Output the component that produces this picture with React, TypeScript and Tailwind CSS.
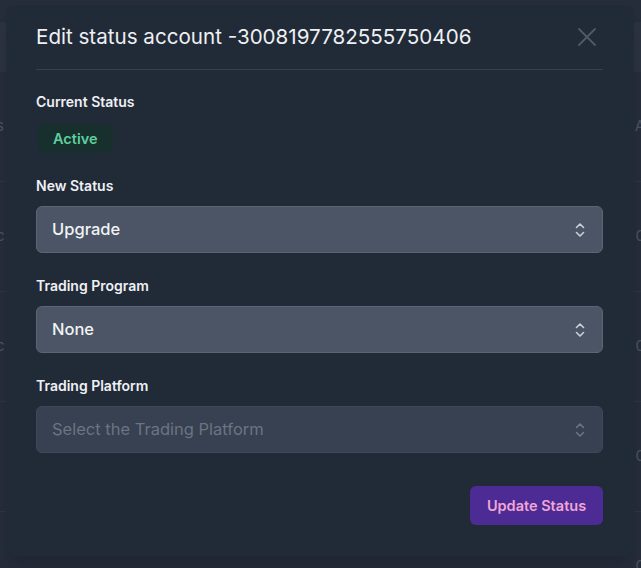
const rows = [
  { left: "s", right: "A" },
  { left: "c", right: "0" },
  { left: "c", right: "0" },
  { left: "l", right: "0" },
  { left: "l", right: "0" },
];

export default function App() {
  return (
    <div
      className="relative h-[568px] w-full overflow-hidden bg-[#262d3a]"
      style={{ fontFamily: "Inter, 'Noto Sans', sans-serif" }}
    >
      {/* page behind the modal (dimmed table) */}
      <div className="flex flex-col text-[15px] text-[#4a5261]">
        <div className="h-[22px]" />
        <div className="h-[50px] bg-[#2b3240]" />
        {rows.map((r, i) => (
          <div
            key={i}
            className="flex h-[110px] items-center justify-between border-b border-[#2e3543]"
          >
            <span className="-ml-[4px]">{r.left}</span>
            <span className="-mr-[4px]">{r.right}</span>
          </div>
        ))}
      </div>

      {/* modal */}
      <div className="absolute left-[6px] top-[5px] flex h-[551px] w-[628px] flex-col rounded-lg bg-[#212a37] pl-[30px] pr-[31px] shadow-xl">
        <div className="flex items-center justify-between border-b border-[#364050] pb-[18px] pt-[18px]">
          <h2 className="text-[20.6px] leading-[28px] text-[#eef0f3]">
            Edit status account -3008197782555750406
          </h2>
          <svg
            width="20"
            height="20"
            viewBox="0 0 20 20"
            className="mr-[6px] text-[#4f5968]"
            fill="none"
            stroke="currentColor"
            strokeWidth="1.8"
            strokeLinecap="round"
          >
            <path d="M2 2 L18 18 M18 2 L2 18" />
          </svg>
        </div>

        <p className="mt-[22px] text-sm font-semibold leading-5 text-[#eef0f3]">
          Current Status
        </p>
        <div className="mt-[13px] flex">
          <span className="ml-[2px] flex h-[28px] items-center rounded-md bg-[#17302e] px-[15px] text-[14.5px] font-semibold text-[#5fcf9e]">
            Active
          </span>
        </div>

        <Field label="New Status" value="Upgrade" />
        <Field label="Trading Program" value="None" />
        <Field label="Trading Platform" value="Select the Trading Platform" placeholder />

        <div className="mt-[33px] flex justify-end">
          <button className="h-[39px] w-[133px] rounded-md bg-[#4c2c94] text-[14.5px] font-semibold text-[#f1a6d6]">
            Update Status
          </button>
        </div>
      </div>
    </div>
  );
}

function Field({
  label,
  value,
  placeholder,
}: {
  label: string;
  value: string;
  placeholder?: boolean;
}) {
  return (
    <div className="mt-[23px]">
      <p className="text-sm font-semibold leading-5 text-[#eef0f3]">{label}</p>
      <div
        className={
          "mt-[10px] flex h-[47px] items-center justify-between rounded-md border pl-[15px] pr-[17px] " +
          (placeholder
            ? "border-[#3f4858] bg-[#374151] text-[#6b7482]"
            : "border-[#5b6576] bg-[#4b5565] text-[#f1f3f5]")
        }
      >
        <span className={"text-[16.5px] " + (placeholder ? "font-normal" : "font-medium")}>
          {value}
        </span>
        <svg
          width="10"
          height="16"
          viewBox="0 0 10 16"
          fill="none"
          stroke="currentColor"
          strokeWidth="1.6"
          strokeLinecap="round"
          strokeLinejoin="round"
          className={placeholder ? "text-[#6b7482]" : "text-[#c9d0da]"}
        >
          <path d="M1.5 5.5 L5 2 L8.5 5.5 M1.5 10.5 L5 14 L8.5 10.5" />
        </svg>
      </div>
    </div>
  );
}
